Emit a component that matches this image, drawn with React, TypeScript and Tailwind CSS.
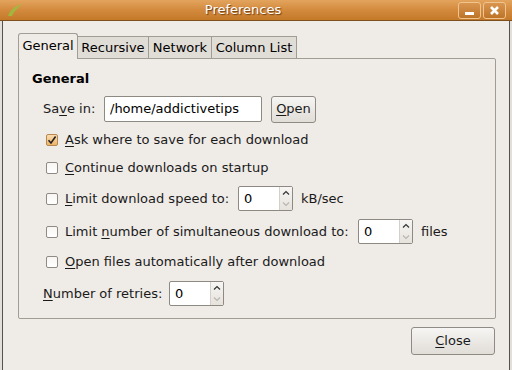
import type { ReactNode } from "react";

const font = { fontFamily: '"DejaVu Sans", Verdana, sans-serif' };

function Mn({ children }: { children: ReactNode }) {
  return <span className="underline underline-offset-[2px] decoration-1">{children}</span>;
}

function CheckBox({ checked }: { checked?: boolean }) {
  return (
    <div
      className={
        checked
          ? "flex h-[12px] w-[12px] items-center justify-center rounded-[2px] border border-[#b5884f] bg-gradient-to-b from-[#fbdcb0] to-[#eeb468]"
          : "h-[12px] w-[12px] rounded-[2px] border border-[#8f8a83] bg-gradient-to-b from-[#f7f6f4] to-white"
      }
    >
      {checked && (
        <svg width="10" height="10" viewBox="0 0 10 10">
          <path d="M1.5 5.2 L4 8 L8.6 1.5" fill="none" stroke="#222" strokeWidth="1.6" />
        </svg>
      )}
    </div>
  );
}

function Spin() {
  return (
    <div className="flex h-[25px] w-[55px] rounded-[2px] border border-[#8e8a83] bg-white">
      <div className="flex flex-1 items-center pl-[5px] text-[13px] text-black">0</div>
      <div className="flex w-[13px] flex-col border-l border-[#d3cfc9] bg-gradient-to-b from-[#f7f6f4] to-[#e6e2dc]">
        <div className="flex flex-1 items-center justify-center">
          <svg width="8" height="6" viewBox="0 0 8 6">
            <path d="M1 4.5 L4 1.5 L7 4.5" fill="none" stroke="#333" strokeWidth="1.2" />
          </svg>
        </div>
        <div className="flex flex-1 items-center justify-center">
          <svg width="8" height="6" viewBox="0 0 8 6">
            <path d="M1 1.5 L4 4.5 L7 1.5" fill="none" stroke="#b9b5af" strokeWidth="1.2" />
          </svg>
        </div>
      </div>
    </div>
  );
}

function Button({ className, children }: { className: string; children: ReactNode }) {
  return (
    <div
      className={`flex items-center justify-center rounded-[3px] border border-[#8f8b84] bg-gradient-to-b from-[#f6f5f3] to-[#e1ddd7] text-[13px] text-[#1a1a1a] ${className}`}
    >
      {children}
    </div>
  );
}

export default function App() {
  const tabs = [
    { label: "Recursive", w: "w-[71px]" },
    { label: "Network", w: "w-[63px]" },
    { label: "Column List", w: "w-[85px]" },
  ];
  return (
    <div className="h-[370px] w-[512px] overflow-hidden bg-[#e2dfdb]" style={font}>
      {/* title bar */}
      <div className="relative flex h-[21px] items-center border-b border-[#7d4f1c] bg-gradient-to-b from-[#e3a45d] via-[#d38a3d] to-[#c47929]">
        <svg className="absolute left-[6px] top-[3px]" width="18" height="14" viewBox="0 0 18 14">
          <path d="M2 13 C4 7 9 3 16 1 C12 5 8 8 6 13 Z" fill="#93c23f" opacity="0.8" />
        </svg>
        <div className="flex-1 pr-[26px] text-center text-[13px] text-white [text-shadow:1px_1px_1px_#6b3f12]">
          Preferences
        </div>
        <div className="absolute right-[6px] top-[2px] flex gap-[2px]">
          <div className="flex h-[17px] w-[23px] items-center justify-center rounded-[3px] border border-[#f0c48e] bg-gradient-to-b from-[#d99550] to-[#bd7428]">
            <div className="mt-[6px] h-[3px] w-[9px] bg-white" />
          </div>
          <div className="flex h-[17px] w-[23px] items-center justify-center rounded-[3px] border border-[#f0c48e] bg-gradient-to-b from-[#d99550] to-[#bd7428]">
            <svg width="11" height="11" viewBox="0 0 11 11">
              <path d="M2 2 L9 9 M9 2 L2 9" stroke="white" strokeWidth="2.6" />
            </svg>
          </div>
        </div>
      </div>

      {/* window body */}
      <div className="ml-[2px] mr-[2px] flex h-[349px] flex-col border-l border-r border-[#55524e] bg-[#efebe7] pl-[15px] pr-[13px] pt-[12px]">
        {/* tabs */}
        <div className="relative z-10 -mb-px flex items-end text-[13px] text-black">
          <div className="flex h-[26px] w-[60px] items-center justify-center rounded-t-[3px] border border-b-0 border-[#a19c94] bg-[#efebe7] pb-[2px]">
            General
          </div>
          {tabs.map((t) => (
            <div
              key={t.label}
              className={`flex h-[23px] ${t.w} items-center justify-center border border-l-0 border-[#a19c94] bg-[#e0dcd6]`}
            >
              {t.label}
            </div>
          ))}
        </div>

        {/* panel */}
        <div className="flex h-[261px] flex-col rounded-[2px] border border-[#a19c94] pl-[13px] pt-[12px] text-[13px] text-[#1a1a1a]">
          <div className="h-[16px] font-bold leading-[16px] text-black">General</div>

          <div className="ml-[11px] mt-[9px] flex h-[26px] items-center">
            <span className="w-[61px]">
              Sa<Mn>v</Mn>e in:
            </span>
            <div className="flex h-[26px] w-[158px] items-center rounded-[2px] border border-[#8e8a83] bg-white pl-[5px] text-black">
              /home/addictivetips
            </div>
            <Button className="ml-[9px] h-[27px] w-[45px]">
              <Mn>O</Mn>pen
            </Button>
          </div>

          <div className="ml-[14px] mt-[10px] flex h-[16px] items-center gap-[7px]">
            <CheckBox checked />
            <span>
              <Mn>A</Mn>sk where to save for each download
            </span>
          </div>

          <div className="ml-[14px] mt-[12px] flex h-[16px] items-center gap-[7px]">
            <CheckBox />
            <span>
              <Mn>C</Mn>ontinue downloads on startup
            </span>
          </div>

          <div className="ml-[14px] mt-[10px] flex h-[25px] items-center">
            <CheckBox />
            <span className="ml-[7px] w-[173px]">
              <Mn>L</Mn>imit download speed to:
            </span>
            <Spin />
            <span className="ml-[8px]">kB/sec</span>
          </div>

          <div className="ml-[14px] mt-[8px] flex h-[25px] items-center">
            <CheckBox />
            <span className="ml-[7px] w-[293px]">
              Limit <Mn>n</Mn>umber of simultaneous download to:
            </span>
            <Spin />
            <span className="ml-[8px]">files</span>
          </div>

          <div className="ml-[14px] mt-[10px] flex h-[16px] items-center gap-[7px]">
            <CheckBox />
            <span>
              <Mn>O</Mn>pen files automatically after download
            </span>
          </div>

          <div className="ml-[11px] mt-[11px] flex h-[25px] items-center">
            <span className="w-[126px]">
              <Mn>N</Mn>umber of retries:
            </span>
            <Spin />
          </div>
        </div>

        <div className="mt-[8px] flex justify-end pr-[1px]">
          <Button className="h-[28px] w-[84px]">
            <Mn>C</Mn>lose
          </Button>
        </div>
      </div>
    </div>
  );
}
